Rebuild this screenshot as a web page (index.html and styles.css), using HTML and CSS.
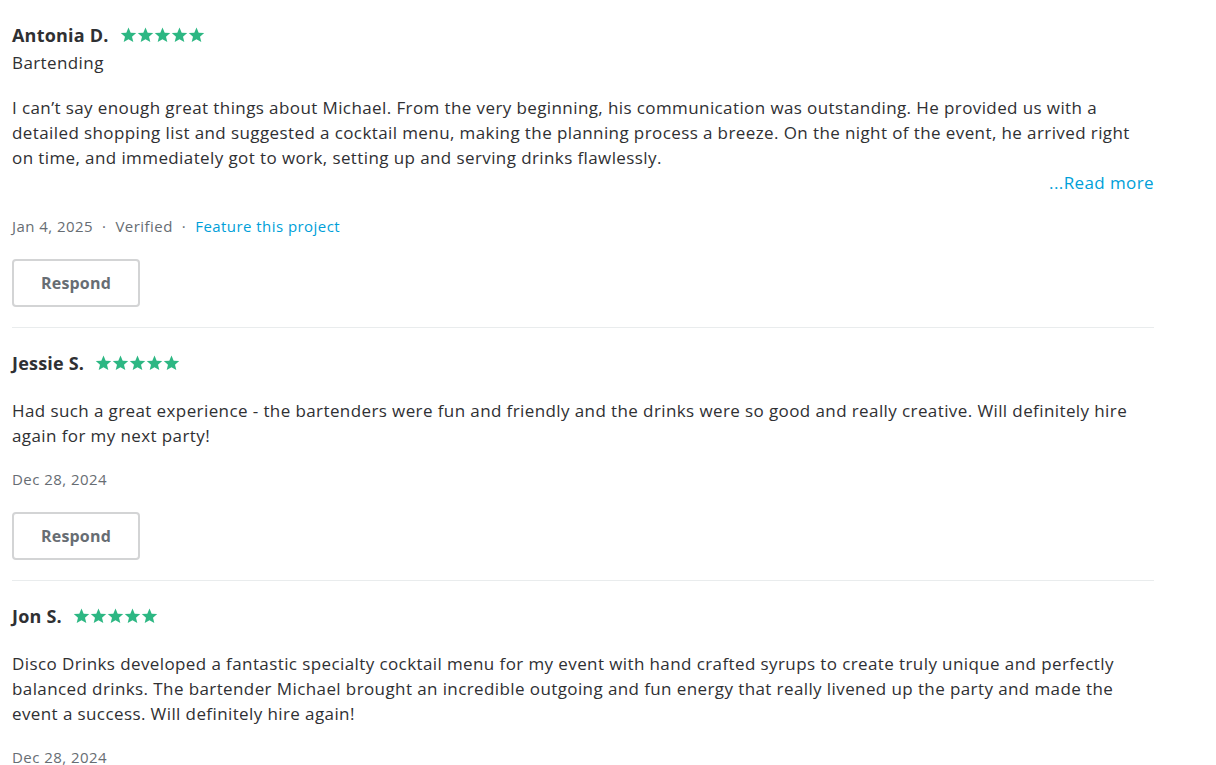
FILE: index.html
```html
<!DOCTYPE html>
<html lang="en">
<head>
<meta charset="utf-8">
<title>Reviews</title>
<link rel="stylesheet" href="styles.css">
</head>
<body>
<main class="reviews">
  <article class="review">
    <div class="review-head">
      <span class="reviewer">Antonia D.</span>
      <span class="stars" aria-label="5 stars">
        <svg viewBox="0 0 17 16"><path d="M8.5 0.6l2.2 5.1 5.5 0.4-4.2 3.6 1.3 5.4-4.8-2.9-4.8 2.9 1.3-5.4L0.8 6.1l5.5-0.4z"/></svg>
        <svg viewBox="0 0 17 16"><path d="M8.5 0.6l2.2 5.1 5.5 0.4-4.2 3.6 1.3 5.4-4.8-2.9-4.8 2.9 1.3-5.4L0.8 6.1l5.5-0.4z"/></svg>
        <svg viewBox="0 0 17 16"><path d="M8.5 0.6l2.2 5.1 5.5 0.4-4.2 3.6 1.3 5.4-4.8-2.9-4.8 2.9 1.3-5.4L0.8 6.1l5.5-0.4z"/></svg>
        <svg viewBox="0 0 17 16"><path d="M8.5 0.6l2.2 5.1 5.5 0.4-4.2 3.6 1.3 5.4-4.8-2.9-4.8 2.9 1.3-5.4L0.8 6.1l5.5-0.4z"/></svg>
        <svg viewBox="0 0 17 16"><path d="M8.5 0.6l2.2 5.1 5.5 0.4-4.2 3.6 1.3 5.4-4.8-2.9-4.8 2.9 1.3-5.4L0.8 6.1l5.5-0.4z"/></svg>
      </span>
    </div>
    <div class="service">Bartending</div>
    <p class="review-text">I can’t say enough great things about Michael. From the very beginning, his communication was outstanding. He provided us with a detailed shopping list and suggested a cocktail menu, making the planning process a breeze. On the night of the event, he arrived right on time, and immediately got to work, setting up and serving drinks flawlessly.</p>
    <div class="read-more"><a href="#">...Read more</a></div>
    <div class="meta">
      <span>Jan 4, 2025</span>
      <span class="dot">·</span>
      <span>Verified</span>
      <span class="dot">·</span>
      <a href="#" class="meta-link">Feature this project</a>
    </div>
    <button class="respond" type="button">Respond</button>
  </article>

  <article class="review">
    <div class="review-head">
      <span class="reviewer">Jessie S.</span>
      <span class="stars" aria-label="5 stars">
        <svg viewBox="0 0 17 16"><path d="M8.5 0.6l2.2 5.1 5.5 0.4-4.2 3.6 1.3 5.4-4.8-2.9-4.8 2.9 1.3-5.4L0.8 6.1l5.5-0.4z"/></svg>
        <svg viewBox="0 0 17 16"><path d="M8.5 0.6l2.2 5.1 5.5 0.4-4.2 3.6 1.3 5.4-4.8-2.9-4.8 2.9 1.3-5.4L0.8 6.1l5.5-0.4z"/></svg>
        <svg viewBox="0 0 17 16"><path d="M8.5 0.6l2.2 5.1 5.5 0.4-4.2 3.6 1.3 5.4-4.8-2.9-4.8 2.9 1.3-5.4L0.8 6.1l5.5-0.4z"/></svg>
        <svg viewBox="0 0 17 16"><path d="M8.5 0.6l2.2 5.1 5.5 0.4-4.2 3.6 1.3 5.4-4.8-2.9-4.8 2.9 1.3-5.4L0.8 6.1l5.5-0.4z"/></svg>
        <svg viewBox="0 0 17 16"><path d="M8.5 0.6l2.2 5.1 5.5 0.4-4.2 3.6 1.3 5.4-4.8-2.9-4.8 2.9 1.3-5.4L0.8 6.1l5.5-0.4z"/></svg>
      </span>
    </div>
    <p class="review-text">Had such a great experience - the bartenders were fun and friendly and the drinks were so good and really creative. Will definitely hire again for my next party!</p>
    <div class="meta">
      <span>Dec 28, 2024</span>
    </div>
    <button class="respond" type="button">Respond</button>
  </article>

  <article class="review">
    <div class="review-head">
      <span class="reviewer">Jon S.</span>
      <span class="stars" aria-label="5 stars">
        <svg viewBox="0 0 17 16"><path d="M8.5 0.6l2.2 5.1 5.5 0.4-4.2 3.6 1.3 5.4-4.8-2.9-4.8 2.9 1.3-5.4L0.8 6.1l5.5-0.4z"/></svg>
        <svg viewBox="0 0 17 16"><path d="M8.5 0.6l2.2 5.1 5.5 0.4-4.2 3.6 1.3 5.4-4.8-2.9-4.8 2.9 1.3-5.4L0.8 6.1l5.5-0.4z"/></svg>
        <svg viewBox="0 0 17 16"><path d="M8.5 0.6l2.2 5.1 5.5 0.4-4.2 3.6 1.3 5.4-4.8-2.9-4.8 2.9 1.3-5.4L0.8 6.1l5.5-0.4z"/></svg>
        <svg viewBox="0 0 17 16"><path d="M8.5 0.6l2.2 5.1 5.5 0.4-4.2 3.6 1.3 5.4-4.8-2.9-4.8 2.9 1.3-5.4L0.8 6.1l5.5-0.4z"/></svg>
        <svg viewBox="0 0 17 16"><path d="M8.5 0.6l2.2 5.1 5.5 0.4-4.2 3.6 1.3 5.4-4.8-2.9-4.8 2.9 1.3-5.4L0.8 6.1l5.5-0.4z"/></svg>
      </span>
    </div>
    <p class="review-text">Disco Drinks developed a fantastic specialty cocktail menu for my event with hand crafted syrups to create truly unique and perfectly balanced drinks. The bartender Michael brought an incredible outgoing and fun energy that really livened up the party and made the event a success. Will definitely hire again!</p>
    <div class="meta">
      <span>Dec 28, 2024</span>
    </div>
  </article>
</main>
</body>
</html>
```

FILE: styles.css
```css
* { box-sizing: border-box; }

html, body {
  margin: 0;
  padding: 0;
  background: #ffffff;
}

body {
  font-family: "Open Sans", "Noto Sans", sans-serif;
  color: #2f3033;
  font-size: 17px;
  letter-spacing: 0.4px;
}

.reviews {
  width: 1142px;
  margin-left: 12px;
}

.review {
  padding: 23px 0 20px;
  border-bottom: 1px solid #e9eced;
}

.review:last-child {
  border-bottom: none;
}

.review-head {
  display: flex;
  align-items: center;
  gap: 11px;
  height: 24px;
}

.reviewer {
  font-size: 18px;
  font-weight: 700;
  line-height: 24px;
  letter-spacing: 0.2px;
  color: #2f3033;
}

.stars {
  display: flex;
}

.stars svg {
  width: 17px;
  height: 16px;
  fill: #2db783;
  display: block;
}

.service {
  margin-top: 7px;
  line-height: 18px;
}

.review-text {
  margin: 23px 0 0;
  line-height: 25px;
}

.read-more {
  text-align: right;
  line-height: 25px;
}

.read-more a,
.meta-link {
  color: #009fd9;
  text-decoration: none;
}

.meta {
  margin-top: 21px;
  line-height: 20px;
  font-size: 15px;
  letter-spacing: 0.45px;
  color: #676d73;
  display: flex;
  align-items: center;
}

.dot {
  padding: 0 9px;
}

.respond {
  display: block;
  margin-top: 23px;
  width: 128px;
  height: 48px;
  border: 2px solid #d3d4d5;
  border-radius: 4px;
  background: #fff;
  font-family: inherit;
  font-size: 16px;
  letter-spacing: 0.2px;
  font-weight: 700;
  color: #676d73;
  cursor: pointer;
}
```
